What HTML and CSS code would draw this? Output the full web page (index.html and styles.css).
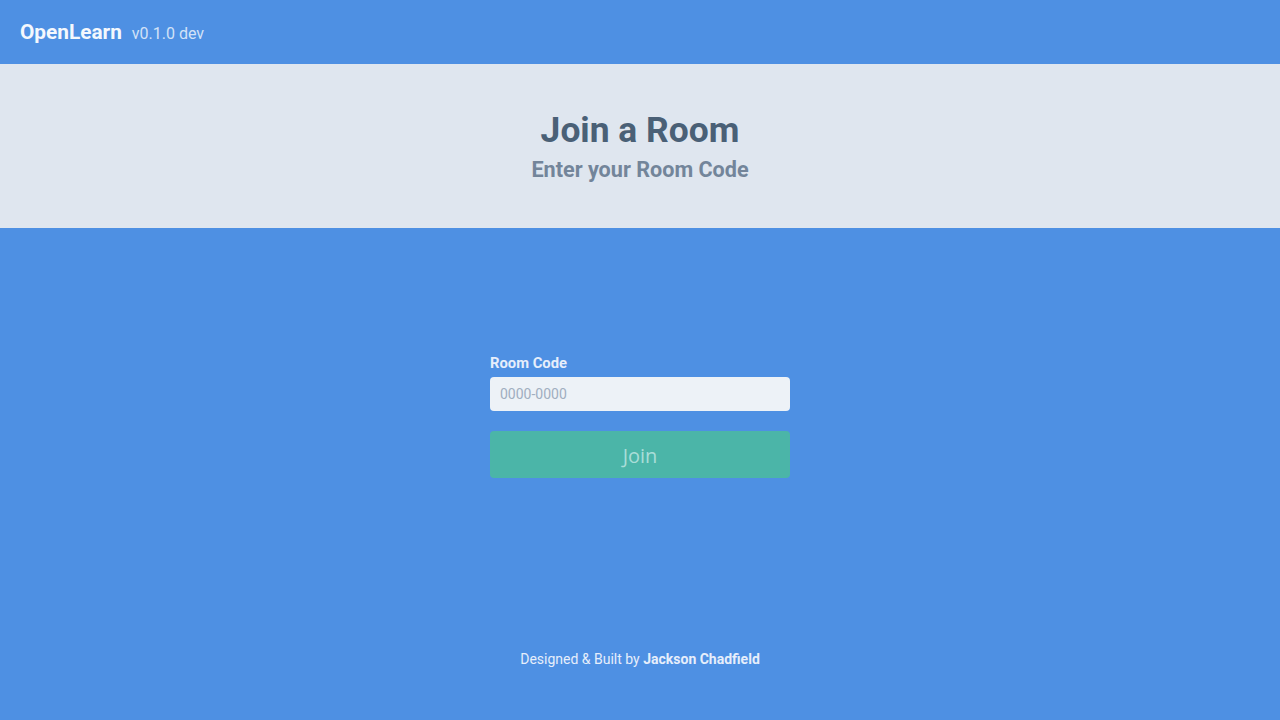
FILE: index.html
```html
<!DOCTYPE html>
<html>
<head>
<meta charset="utf-8">
<link rel="stylesheet" href="styles.css">
</head>
<body>
<div class="page">
  <nav class="navbar">
    <span class="brand">OpenLearn</span>
    <span class="version">v0.1.0 dev</span>
  </nav>
  <header class="hero">
    <h1 class="title">Join a Room</h1>
    <h2 class="subtitle">Enter your Room Code</h2>
  </header>
  <main class="main">
    <form class="form">
      <label class="label" for="code">Room Code</label>
      <input class="input" id="code" type="text" placeholder="0000-0000">
      <button class="btn" type="button">Join</button>
    </form>
  </main>
  <footer class="footer">Designed &amp; Built by <strong>Jackson Chadfield</strong></footer>
</div>
</body>
</html>
```
FILE: styles.css
```css
* { box-sizing: border-box; }
html, body { margin: 0; padding: 0; }
body {
  font-family: Roboto, "Liberation Sans", sans-serif;
  background: #4e90e3;
}
.page {
  min-height: 720px;
  display: flex;
  flex-direction: column;
}
.navbar {
  height: 64px;
  display: flex;
  align-items: center;
  padding: 0 20px;
  gap: 10px;
  background: #4e90e3;
}
.brand {
  color: #f4f8fd;
  font-weight: 700;
  font-size: 20.8px;
}
.version {
  color: #d2e2f7;
  font-size: 16px;
  padding-top: 2px;
}
.hero {
  height: 164px;
  background: #dfe6ef;
  display: flex;
  flex-direction: column;
  align-items: center;
  justify-content: center;
  padding-top: 6px;
}
.title {
  margin: 0;
  font-size: 35.4px;
  font-weight: 700;
  color: #4a6076;
  line-height: 42px;
}
.subtitle {
  margin: 0;
  font-size: 21.6px;
  font-weight: 700;
  color: #73859a;
  line-height: 38px;
}
.main {
  flex: 1;
  display: flex;
  justify-content: center;
  padding-top: 125px;
}
.form {
  width: 300px;
  display: flex;
  flex-direction: column;
}
.label {
  color: #e6eefb;
  font-size: 14.8px;
  font-weight: 700;
  line-height: 20px;
  margin-bottom: 4px;
}
.input {
  height: 34px;
  border: none;
  border-radius: 4px;
  background: #edf2f7;
  padding: 0 10px;
  font-family: Roboto, "Liberation Sans", sans-serif;
  font-size: 14px;
  color: #4a5568;
}
.input::placeholder { color: #a0aec0; }
.btn {
  margin-top: 20px;
  height: 47px;
  border: none;
  border-radius: 4px;
  background: #4bb5a8;
  color: #a9ddd8;
  font-family: "Open Sans", sans-serif;
  font-size: 20px;
  padding: 2px 0 0;
}
.footer {
  text-align: center;
  color: #e6eefb;
  font-size: 14px;
  padding-bottom: 53px;
  line-height: 16px;
}
.footer strong { font-weight: 700; }
```
